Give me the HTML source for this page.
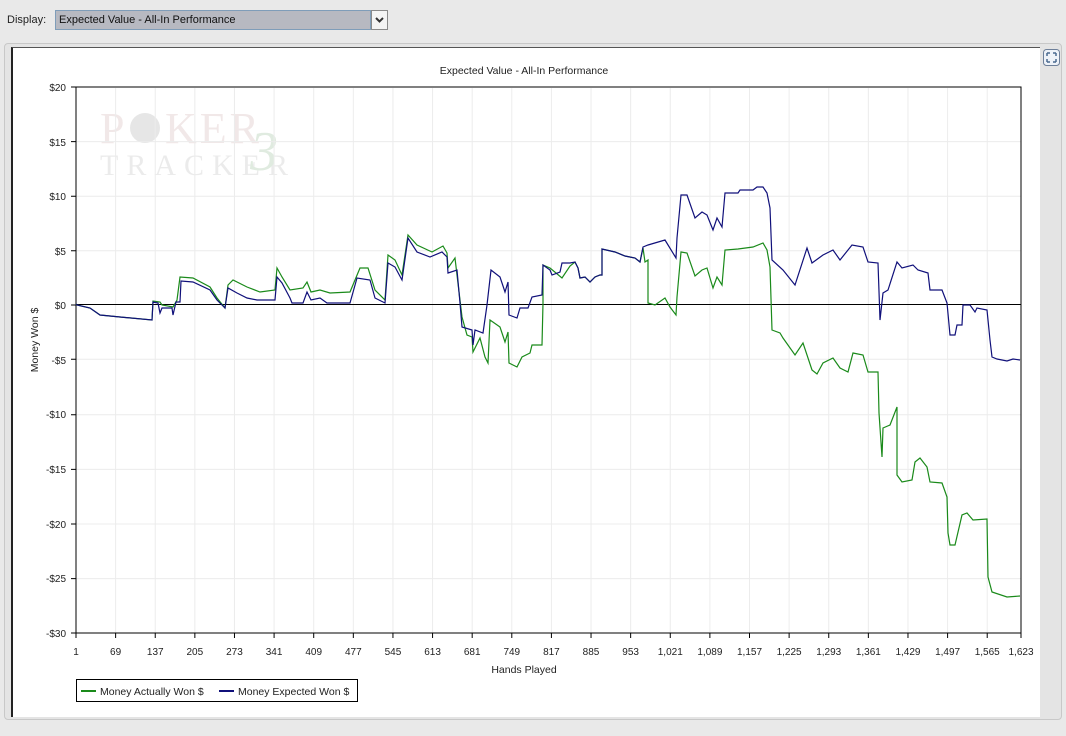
<!DOCTYPE html>
<html><head><meta charset="utf-8"><style>
body{margin:0;width:1066px;height:736px;background:#e9e9e9;font-family:"Liberation Sans",sans-serif;overflow:hidden;position:relative}
.lbl{position:absolute;left:7px;top:14px;font-size:11px;color:#222}
.combo{position:absolute;left:55px;top:10px;width:316px;height:20px;background:#b7b9c1;border:1px solid #7f9db9;box-sizing:border-box;font-size:11px;line-height:18px;padding-left:3px;color:#111}
.btn{position:absolute;left:371px;top:10px;width:17px;height:20px;background:#f4f4f4;border:1px solid #8a8a8a;box-sizing:border-box}
.panel{position:absolute;left:4px;top:43px;width:1058px;height:677px;border:1px solid #c8c8c8;border-radius:4px;background:#e4e4e4;box-sizing:border-box}
.white{position:absolute;left:11px;top:47px;width:1029px;height:670px;background:#fff;border-left:2px solid #222;border-top:1px solid #555;box-sizing:border-box}
</style></head><body>
<div class="lbl">Display:</div>
<div class="combo">Expected Value - All-In Performance</div>
<div class="btn"><svg width="15" height="18"><path d="M4 7 L7.5 10.5 L11 7" stroke="#333" stroke-width="2" fill="none"/></svg></div>
<div class="panel"></div>
<div class="white"></div>
<svg style="position:absolute;left:1043px;top:49px" width="17" height="17"><rect x="0.5" y="0.5" width="16" height="16" rx="3" fill="#eef2f8" stroke="#6d7f99"/><path d="M4 4h3M4 4v3M13 4h-3M13 4v3M4 13h3M4 13v-3M13 13h-3M13 13v-3" stroke="#4a6a90" stroke-width="1.5"/></svg>
<svg style="position:absolute;left:0;top:0" width="1066" height="736" font-family="Liberation Sans, sans-serif">
<g opacity="0.14" font-family="Liberation Serif, serif" fill="#a06060">
<text x="100" y="143" font-size="44" letter-spacing="3">P</text>
<circle cx="145" cy="128" r="15" fill="#555"/>
<text x="165" y="143" font-size="44" letter-spacing="3">KER</text>
<text x="100" y="175" font-size="30" letter-spacing="8" fill="#777">TRACKER</text>
<text x="250" y="170" font-size="56" fill="#2a7a2a" font-style="italic">3</text>
</g>
<g stroke="#ececec" stroke-width="1">
<path d="M76 141.6H1021M76 196.2H1021M76 250.8H1021M76 359.2H1021M76 414.8H1021M76 469.4H1021M76 524H1021M76 578.6H1021"/>
</g>
<g id="vgrid" stroke="#ececec"></g>
<text x="524" y="74" font-size="10.5" text-anchor="middle" fill="#222">Expected Value - All-In Performance</text>
<rect x="76" y="87" width="945" height="546" fill="none" stroke="#000"/>
<line x1="76" y1="304.5" x2="1021" y2="304.5" stroke="#000"/>
<g font-size="10" fill="#222" text-anchor="end">
<text x="66" y="91">$20</text><text x="66" y="146">$15</text><text x="66" y="200">$10</text><text x="66" y="255">$5</text><text x="66" y="309">$0</text><text x="66" y="364">-$5</text><text x="66" y="418">-$10</text><text x="66" y="473">-$15</text><text x="66" y="528">-$20</text><text x="66" y="582">-$25</text><text x="66" y="637">-$30</text>
</g>
<g stroke="#000"><path d="M71 87H76M71 141.6H76M71 196.2H76M71 250.8H76M71 305H76M71 359.2H76M71 414.8H76M71 469.4H76M71 524H76M71 578.6H76M71 633H76"/></g>
<g id="xt" font-size="10" fill="#222" text-anchor="middle"></g>
<text x="524" y="673" font-size="10.5" text-anchor="middle" fill="#222">Hands Played</text>
<text transform="translate(38,340) rotate(-90)" font-size="10.5" text-anchor="middle" fill="#222">Money Won $</text>
<polyline fill="none" stroke="#1a8a1a" stroke-width="1.2" points="76,304 77,305 90,308 100,315 120,317 152,320 153,301 160,302 162,305 173,307 177,300 180,277 193,278 210,287 217,298 225,308 228,285 233,280 247,287 260,292 275,290 277,268 282,277 290,290 303,288 307,282 311,292 320,290 330,293 350,292 360,268 368,268 375,290 385,300 388,255 395,260 402,275 408,235 417,245 432,252 443,246 447,253 448,268 455,258 457,275 462,317 467,335 472,337 473,352 480,338 485,357 488,363 490,320 500,327 505,342 508,332 509,363 517,367 522,357 530,353 532,345 542,345 543,303 543,265 550,268 562,278 570,266 575,262 578,268 580,278 585,277 590,282 595,277 600,275 602,275 602,249 615,252 625,256 635,258 640,262 643,248 645,262 648,260 648,303 655,305 665,298 670,307 676,315 677,297 681,252 687,253 695,276 702,270 707,268 713,288 717,277 722,285 725,250 738,249 753,247 763,243 767,250 770,267 772,330 780,333 783,338 795,355 803,343 812,370 817,374 823,363 833,358 840,368 848,372 853,353 863,355 868,372 878,372 879,413 882,457 883,428 890,425 897,407 897,475 902,482 912,480 915,462 920,458 927,467 930,482 942,483 947,497 948,533 950,545 955,545 962,515 967,513 973,520 987,519 988,577 992,592 1007,597 1020,596"/>
<polyline fill="none" stroke="#10107a" stroke-width="1.2" points="76,304 77,305 90,308 100,315 120,317 152,320 153,302 158,303 160,313 162,308 172,308 173,315 176,302 180,302 181,281 193,282 210,290 217,300 225,308 228,288 237,293 247,298 257,300 275,300 277,277 282,283 290,298 292,303 303,303 307,292 311,300 320,298 327,303 350,303 357,278 370,280 375,298 385,303 388,263 395,267 402,280 408,238 417,252 430,257 442,252 447,257 448,273 457,270 460,303 462,327 472,330 473,345 475,330 483,333 487,305 491,270 500,277 505,292 508,282 509,315 517,318 520,308 528,308 532,297 542,295 543,265 550,270 552,275 560,272 562,263 570,263 575,262 578,268 580,278 585,277 590,282 595,277 600,275 602,275 602,249 615,252 625,256 635,258 640,262 643,247 648,245 665,240 676,258 677,238 681,195 687,195 695,218 702,212 707,215 713,230 717,218 722,227 725,193 738,193 740,190 753,190 757,187 763,187 767,193 770,208 772,260 783,270 795,285 807,248 812,263 823,255 833,250 840,260 852,245 863,247 868,262 878,263 880,320 883,293 888,290 897,262 902,268 913,265 918,270 928,273 930,290 942,290 947,303 950,335 955,335 957,325 962,325 963,305 970,305 975,312 977,308 987,310 990,340 992,357 997,359 1007,361 1013,359 1020,360"/>
<rect x="76.5" y="679.5" width="281" height="22" fill="#fff" stroke="#000"/>
<line x1="81" y1="691" x2="96" y2="691" stroke="#1a8a1a" stroke-width="2"/>
<text x="100" y="695" font-size="10.5" fill="#222">Money Actually Won $</text>
<line x1="219" y1="691" x2="234" y2="691" stroke="#10107a" stroke-width="2"/>
<text x="238" y="695" font-size="10.5" fill="#222">Money Expected Won $</text>
</svg>
<script>
var ns="http://www.w3.org/2000/svg",xt=document.getElementById("xt"),vg=document.getElementById("vgrid");
var labs=["1","69","137","205","273","341","409","477","545","613","681","749","817","885","953","1,021","1,089","1,157","1,225","1,293","1,361","1,429","1,497","1,565","1,623"];
for(var i=0;i<labs.length;i++){var v=i==24?1622:i*68;var x=76+v*945/1622;
var t=document.createElementNS(ns,"text");t.setAttribute("x",x);t.setAttribute("y",655);t.textContent=labs[i];xt.appendChild(t);
var l=document.createElementNS(ns,"line");l.setAttribute("x1",x);l.setAttribute("x2",x);l.setAttribute("y1",88);l.setAttribute("y2",633);vg.appendChild(l);
var k=document.createElementNS(ns,"line");k.setAttribute("x1",x);k.setAttribute("x2",x);k.setAttribute("y1",633);k.setAttribute("y2",638);k.setAttribute("stroke","#000");vg.appendChild(k);}
</script>
</body></html>
